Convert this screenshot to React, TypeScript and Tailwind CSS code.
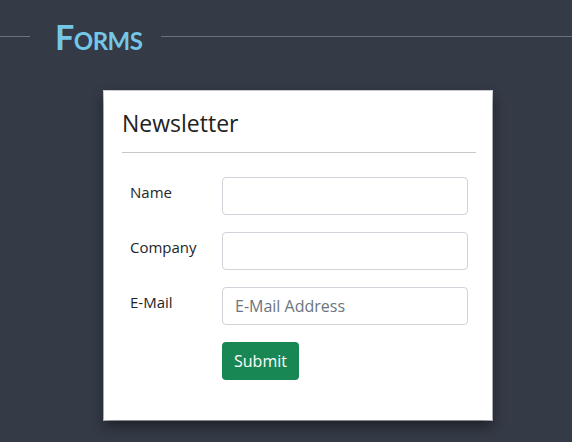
export default function App() {
    const rows = [
        { label: 'Name', placeholder: '' },
        { label: 'Company', placeholder: '' },
        { label: 'E-Mail', placeholder: 'E-Mail Address' }
    ];

    return (
        <div className="min-h-[442px] w-full bg-[#343a46] overflow-hidden font-['Open_Sans',sans-serif]">
            {/* Section heading */}
            <div className="flex h-[72px] items-center">
                <div className="h-px w-[30px] bg-[#6b717c]" />
                <h1 className="ml-[25px] mr-[19px] pt-[1px] text-[34px] leading-none font-bold tracking-[-0.5px] text-[#74c7e6] [font-variant:small-caps] font-['Lato',sans-serif]">
                    Forms
                </h1>
                <div className="h-px flex-1 bg-[#6b717c]" />
            </div>

            {/* Card */}
            <div className="ml-[104px] mt-[19px] w-[388px] bg-white pl-[18px] pr-[16px] pt-[16px] pb-[40px] shadow-[0_6px_12px_rgba(0,0,0,0.45),0_0_0_1px_#d5d8dd]">
                <h2 className="text-[23px] leading-[32px] text-[#222] pb-[13px] border-b border-[#c8c8c8]">
                    Newsletter
                </h2>

                <form className="mt-[24px] flex flex-col gap-[17px]" onSubmit={e => e.preventDefault()}>
                    {rows.map(row => (
                        <div key={row.label} className="flex">
                            <label className="w-[100px] pl-[8px] pt-[4px] text-[15px] leading-[22px] text-[#212529]">
                                {row.label}
                            </label>
                            <input
                                type="text"
                                placeholder={row.placeholder}
                                className="h-[38px] w-[246px] rounded-[4px] border border-[#ced4da] px-[12px] text-[16px] text-[#212529] placeholder:text-[#6c757d] outline-none"
                            />
                        </div>
                    ))}
                    <div className="flex">
                        <div className="w-[100px]" />
                        <button
                            type="submit"
                            className="h-[38px] w-[77px] rounded-[4px] bg-[#198754] text-[16px] text-white"
                        >
                            Submit
                        </button>
                    </div>
                </form>
            </div>
        </div>
    );
}
